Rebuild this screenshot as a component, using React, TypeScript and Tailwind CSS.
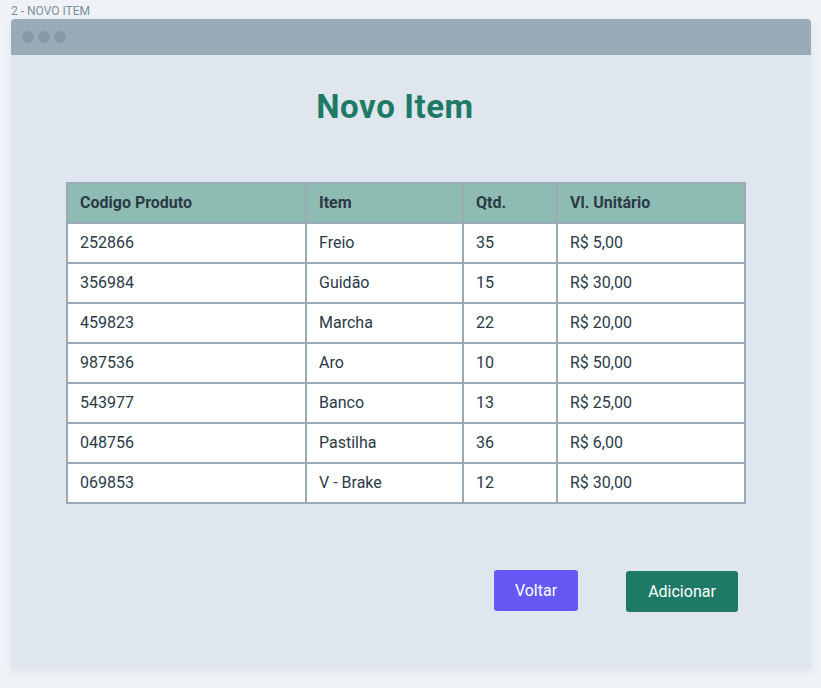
const rows = [
  { code: "252866", item: "Freio", qty: "35", price: "R$ 5,00" },
  { code: "356984", item: "Guidão", qty: "15", price: "R$ 30,00" },
  { code: "459823", item: "Marcha", qty: "22", price: "R$ 20,00" },
  { code: "987536", item: "Aro", qty: "10", price: "R$ 50,00" },
  { code: "543977", item: "Banco", qty: "13", price: "R$ 25,00" },
  { code: "048756", item: "Pastilha", qty: "36", price: "R$ 6,00" },
  { code: "069853", item: "V - Brake", qty: "12", price: "R$ 30,00" },
];

export default function App() {
  return (
    <div
      className="min-h-[688px] w-full bg-[#eff3f7] pt-[4px] pl-[11px]"
      style={{ fontFamily: "Roboto, 'Liberation Sans', sans-serif" }}
    >
      <div className="h-[15px] text-[12px] leading-[15px] text-[#7d8e9c]">
        2 - NOVO ITEM
      </div>
      <div className="w-[800px] overflow-hidden rounded-t-[4px] bg-[#dfe6ee] shadow-[0_4px_10px_rgba(100,120,140,0.12)]">
        <div className="flex h-[36px] items-center gap-[4px] bg-[#9aabb8] pl-[11px]">
          <span className="h-[12px] w-[12px] rounded-full bg-[#8798a7]" />
          <span className="h-[12px] w-[12px] rounded-full bg-[#8798a7]" />
          <span className="h-[12px] w-[12px] rounded-full bg-[#8798a7]" />
        </div>
        <div className="flex flex-col pl-[55px] pr-[65px] pt-[33px] pb-[56px]">
          <h1 className="h-[40px] pr-[22px] text-center text-[33px] font-bold leading-[38px] tracking-[0.6px] text-[#1e7a66]">
            Novo Item
          </h1>
          <table className="mt-[54px] w-[680px] border-collapse border-2 border-[#9aabb8] text-[16px] text-[#2a3a47]">
            <thead>
              <tr className="h-[40px] bg-[#8fbcb2] text-left">
                <th className="w-[239px] border-2 border-[#9aabb8] px-[12px] font-bold">Codigo Produto</th>
                <th className="w-[157px] border-2 border-[#9aabb8] px-[12px] font-bold">Item</th>
                <th className="w-[94px] border-2 border-[#9aabb8] px-[12px] font-bold">Qtd.</th>
                <th className="border-2 border-[#9aabb8] px-[12px] font-bold">Vl. Unitário</th>
              </tr>
            </thead>
            <tbody className="bg-white">
              {rows.map((r) => (
                <tr key={r.code} className="h-[40px]">
                  <td className="border-2 border-[#9aabb8] px-[12px]">{r.code}</td>
                  <td className="border-2 border-[#9aabb8] px-[12px]">{r.item}</td>
                  <td className="border-2 border-[#9aabb8] px-[12px]">{r.qty}</td>
                  <td className="border-2 border-[#9aabb8] px-[12px]">{r.price}</td>
                </tr>
              ))}
            </tbody>
          </table>
          <div className="mt-[66px] flex w-[680px] items-start justify-end gap-[48px] pr-[8px]">
            <button className="h-[41px] w-[84px] rounded-[3px] bg-[#6558f5] text-[16px] text-white">
              Voltar
            </button>
            <button className="mt-[1px] h-[41px] w-[112px] rounded-[3px] bg-[#1e7a66] text-[16px] text-white">
              Adicionar
            </button>
          </div>
        </div>
      </div>
    </div>
  );
}
